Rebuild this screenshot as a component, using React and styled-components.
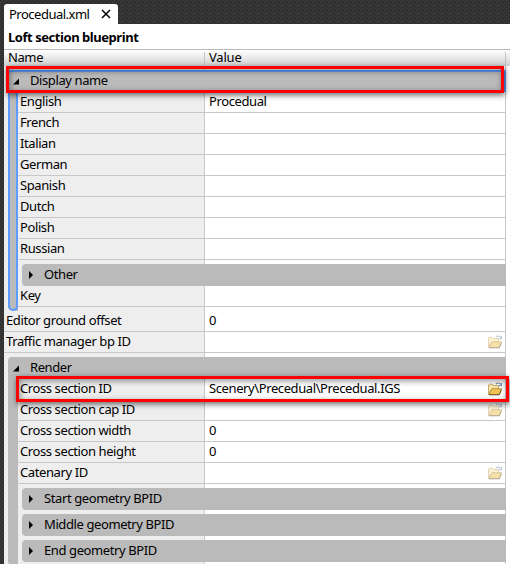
import React from 'react';
import styled, { createGlobalStyle } from 'styled-components';

const Global = createGlobalStyle`
  * { box-sizing: border-box; }
  body { margin: 0; overflow: hidden; background: #333; font: 13px/20px "Noto Sans", sans-serif; color: #000; }
`;
const Window = styled.div`
  position: relative; width: 510px; height: 564px; padding: 4px 0 0 4px; overflow: hidden;
  background-color: #303030;
  background-image:
    radial-gradient(circle at 1.5px 1.5px, #4a4a4a 0.6px, transparent 0.9px),
    radial-gradient(circle at 1.5px 1.5px, #4a4a4a 0.6px, transparent 0.9px);
  background-size: 4px 4px; background-position: -1px 1px, 1px 3px;
`;
const Tab = styled.div`
  display: flex; align-items: center; justify-content: space-between;
  width: 114px; height: 20px; padding: 0 7px 0 5px; background: #fff; border-radius: 3px 3px 0 0;
`;
const Panel = styled.div`height: 540px; background: #fff;`;
const Title = styled.div`
  height: 25px; padding-left: 4px; line-height: 26px; font-weight: 700;
`;
const Label = styled.span`white-space: pre; letter-spacing: ${p => p.$ls ?? -0.4}px;`;
const Header = styled.div`
  display: flex; height: 17px; border-top: 1px solid #bababa;
  background: linear-gradient(#fff, #d2d2d2);
`;
const HeadCell = styled.div`
  width: ${p => p.$w}px; margin-top: 2px; padding-left: 4px; line-height: 11px; border-right: 1px solid #c4c4c4;
`;
const Tree = styled.div`
  width: 502px; height: 498px; padding-top: 4px; border-right: 1px solid #c8c8c8;
  background:
    linear-gradient(#c8c8c8, #c8c8c8) 200px 0 / 1px 100% no-repeat,
    linear-gradient(#eee, #eee) 0 0 / 200px 100% no-repeat;
`;
const Row = styled.div`
  display: flex; height: 21px; line-height: 18px; width: ${p => p.$nested ? 487 : 501}px;
`;
const Cell = styled.div`
  width: ${p => p.$nested ? 186 : 200}px; padding-left: 2px; border-bottom: 1px solid #c8c8c8; background: #eee;
`;
const Value = styled.div`
  display: flex; flex: 1; justify-content: space-between; padding: 0 2px 0 4px;
  border-left: 1px solid #c8c8c8; border-bottom: 1px solid #c8c8c8; background: #fff;
`;
const Group = styled.div`
  position: relative; width: 498px; margin: 4px 0 0 4px; padding: 0 0 4px 10px;
  background: linear-gradient(#bababa, #bababa) 0 0 / 10px 100% no-repeat;
  border-radius: 5px;
  &:first-child { margin-top: 0; }
`;
const Bar = styled.div`
  display: flex; height: 22px; line-height: 20px; width: ${p => p.$nested ? 484 : 498}px;
  margin-left: ${p => p.$nested ? 4 : -10}px; margin-top: ${p => p.$nested ? 4 : 0}px;
  padding-left: 5px; background: #bababa; border-radius: 4px 0 0 ${p => p.$nested ? 4 : 0}px;
  box-shadow: ${p => p.$focused ? 'inset 0 2px #5c9cff, inset -2px 0 #5c9cff, inset 1px 0 #5c9cff' : 'none'};
`;
const Arrow = styled.svg`width: 8px; height: 10px; margin: 6px 9px 0 0;`;
const Focus = styled.div`
  position: absolute; left: 0; top: 22px; bottom: 0; width: 10px;
  border: 2px solid #5c9cff; border-top: 0; border-radius: 0 0 5px 5px;
`;
const Mark = styled.div`
  position: absolute; left: ${p => p.$x}px; top: ${p => p.$y}px; width: ${p => p.$w}px; height: ${p => p.$h}px;
  border: 3px solid #f00; box-shadow: 1px 2px 6px rgba(0,0,0,.6), inset 1px 2px 6px rgba(0,0,0,.42);
`;
const FolderSvg = styled.svg`width: 15px; height: 14px; margin-top: 3px; opacity: ${p => p.$dim ? 0.5 : 1};`;

const Folder = ({ dim }) => (
  <FolderSvg $dim={dim} viewBox="0 0 15 14">
    <path d="M.5 12.5V3L1.5 2.2H4.5L5.5 3.5H10.5V7.5L3 8Z" fill="#fbe6a4" stroke="#b99a58" strokeWidth=".8" />
    <path d="M1 12.5L4 6.7H13.8L11.3 12.5Z" fill="#f2c452" stroke="#a8843c" strokeWidth=".8" />
    <path d="M1 12.8H11.3L13.2 8" fill="none" stroke="#5f4c22" strokeWidth=".9" />
    <path d="M8 2.2C9.2.6 11.2.6 12.6 2.4M13.4 1V3.8H10.8" fill="none" stroke="#7189a8" strokeWidth="1.1" />
  </FolderSvg>
);
const Item = ({ name, value = '', nested, file, dim }) => (
  <Row $nested={nested}>
    <Cell $nested={nested}><Label>{name}</Label></Cell>
    <Value><Label>{value}</Label>{file && <Folder dim={dim} />}</Value>
  </Row>
);
const Heading = ({ name, nested, open, focused }) => (
  <Bar $nested={nested} $focused={focused}>
    <Arrow viewBox="0 0 8 10">
      {open ? <path d="M0 8.5L6 2.5V8.5Z" /> : <path d="M2 1L6 5L2 9Z" />}
    </Arrow>
    <Label>{name}</Label>
  </Bar>
);
const languages = ['English', 'French', 'Italian', 'German', 'Spanish', 'Dutch', 'Polish', 'Russian'];

export default function App() {
  return (
    <Window>
      <Global />
      <Tab>
        <Label $ls={-0.5}>Procedual.xml</Label>
        <svg width="10" height="10" viewBox="0 0 10 10"><path d="M1 1L9 9M9 1L1 9" stroke="#000" strokeWidth="1.5" /></svg>
      </Tab>
      <Panel>
        <Title><Label $ls={-0.45}>Loft section blueprint</Label></Title>
        <Header><HeadCell $w={201}><Label>Name</Label></HeadCell><HeadCell $w={301}><Label $ls={-0.2}>Value</Label></HeadCell></Header>
        <Tree>
          <Group>
            <Heading name="Display name" open focused />
            {languages.map(l => <Item key={l} nested name={l} value={l === 'English' ? 'Procedual' : ''} />)}
            <Heading name="Other" nested />
            <Item nested name="Key" />
            <Focus />
          </Group>
          <Item name="Editor ground offset" value="0" />
          <Item name="Traffic manager bp ID" file dim />
          <Group>
            <Heading name="Render" open />
            <Item nested name="Cross section ID" value="Scenery\Precedual\Precedual.IGS" file />
            <Item nested name="Cross section cap ID" file dim />
            <Item nested name="Cross section width" value="0" />
            <Item nested name="Cross section height" value="0" />
            <Item nested name="Catenary ID" file dim />
            <Heading name="Start geometry BPID" nested />
            <Heading name="Middle geometry BPID" nested />
            <Heading name="End geometry BPID" nested />
          </Group>
        </Tree>
      </Panel>
      <Mark $x={6} $y={66} $w={498} $h={27} />
      <Mark $x={16} $y={376} $w={493} $h={26} />
    </Window>
  );
}
